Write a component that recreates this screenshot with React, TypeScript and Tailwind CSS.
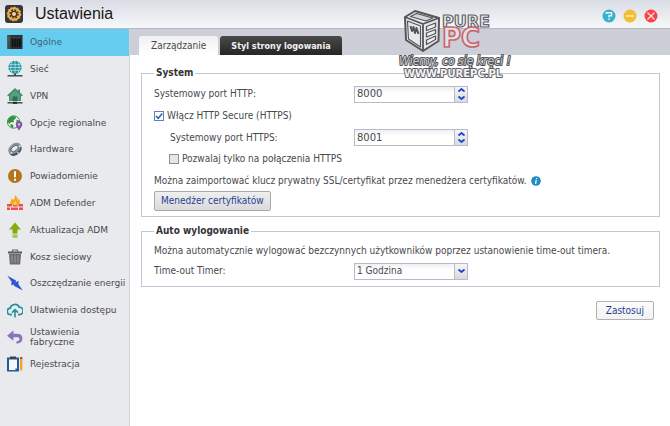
import { useState, type ReactNode } from 'react';

const menu: { label: string; icon: ReactNode }[] = [
  {
    label: 'Ogólne',
    icon: (
      <>
        <rect x="0.5" y="1" width="15" height="14" fill="#2b2d30" />
        <rect x="0.5" y="1" width="3" height="14" fill="#3d4d45" />
        <path d="M5.5 5v8M8 5v8M10.5 5v8M13 5v8" stroke="#101112" strokeWidth="1.6" />
        <path d="M5 3.2h9" stroke="#45494d" strokeWidth="0.8" />
        <path d="M1.5 3.5h1M1.5 6h1" stroke="#3fb26b" />
      </>
    ),
  },
  {
    label: 'Sieć',
    icon: (
      <>
        <circle cx="8" cy="6.4" r="6.6" fill="#1f98a3" />
        <path d="M2.4 3.6h11.2M1.6 6.5h12.8M2.4 9.4h11.200M8 0v13M5 1c-1.600 3-1.600 8 0 11M11 1c1.600 3 1.600 8 0 11" stroke="#e4f2f3" strokeWidth="0.6" fill="none" />
        <path d="M8 12.500v2" stroke="#444" strokeWidth="2" />
        <path d="M0.500 14.800h15" stroke="#3c4043" strokeWidth="1.400" />
      </>
    ),
  },
  {
    label: 'VPN',
    icon: (
      <>
        <path d="M8 0 0 7.4l2 .8V13h12V8.2l2-.8-3-2.8V1.4h-2v1.4z" fill="#45906f" />
        <path d="M8 2.6 3 7.2V12h10V7.2z" fill="#579f7e" />
        <path d="M5.5 8.5h5V13h-5z" fill="#2f6f54" />
        <path d="M0.5 14.8h15" stroke="#3c4043" strokeWidth="1.4" />
        <path d="M6 14.8h4" stroke="#222" strokeWidth="2" />
      </>
    ),
  },
  {
    label: 'Opcje regionalne',
    icon: (
      <>
        <circle cx="6.6" cy="7" r="6.2" fill="#f0f5f1" stroke="#3c9b4d" strokeWidth="1" />
        <path d="M5 1 9 1.6 8.5 4 6.5 5 7 7.4 4.5 7 2 9 .6 6 2 3zM3.5 9l3 1-.5 3.2-2.6-1.6zM9.5 4.5 13 6l-1 1.5-2.5-.8z" fill="#2f9142" />
        <path d="M12 6.2a3.3 3.3 0 0 1 3.3 3.3c0 2.3-2.2 3.5-3.3 6.3-1.1-2.8-3.3-4-3.3-6.3A3.3 3.3 0 0 1 12 6.2" fill="#8653a4" />
        <circle cx="12" cy="9.4" r="1.2" fill="#d8c3e5" />
      </>
    ),
  },
  {
    label: 'Hardware',
    icon: (
      <g transform="rotate(-38 8 8)">
        <ellipse cx="7.6" cy="9.4" rx="6.9" ry="4.6" fill="#48515a" />
        <ellipse cx="8" cy="7.2" rx="7" ry="4.7" fill="#87929a" />
        <ellipse cx="8" cy="7.4" rx="4.2" ry="2.4" fill="#e9eaee" stroke="#4a535b" strokeWidth="0.8" />
        <path d="m1.8 9 2-.6M14.3 9l-2-.6M8 12v2" stroke="#e9eaee" strokeWidth="1.2" />
      </g>
    ),
  },
  {
    label: 'Powiadomienie',
    icon: (
      <>
        <circle cx="8" cy="8" r="7" fill="#b5751b" />
        <path d="M8 3.2v6" stroke="#fff" strokeWidth="2" />
        <path d="M8 10.8v2" stroke="#fff" strokeWidth="2" />
      </>
    ),
  },
  {
    label: 'ADM Defender',
    icon: (
      <>
        <path d="M4 10C2 7 4.4 6 4.4 3.4 6 4 6 5.4 6 5.4S8.6 3 7.8 0c2.8 1.6 2.8 4.4 2.8 5.4.6-.6.8-1.4.8-1.8C13.6 6 13.2 8.4 12 10z" fill="#f6a71c" />
        <path d="M6.4 10c-.6-2 1.6-2.6 1.6-4.6C10 7 10 8.8 9.6 10z" fill="#fbc94a" />
        <path d="M0 9h5v2.6H0zM6 10h4.5v1.6H6zM11.5 9H16v2.6h-4.5zM0 12.6h3V15H0zM4 12.6h7V15H4zM12 12.6h4V15h-4z" fill="#ee4b4e" />
      </>
    ),
  },
  {
    label: 'Aktualizacja ADM',
    icon: (
      <>
        <path d="M8 .5 14 7.4h-3.5v4.2h-5V7.4H2z" fill="#86ab0d" />
        <path d="M5.5 12.4h5v1h-5zM5.5 14.3h5v1.2h-5z" fill="#86ab0d" />
      </>
    ),
  },
  {
    label: 'Kosz sieciowy',
    icon: (
      <>
        <path d="M5.5 2.5V1h5v1.5" fill="none" stroke="#666" strokeWidth="1.2" />
        <path d="M1 2.4h14v2.2H1z" fill="#606060" />
        <path d="M2 5h12l-.8 10.4H2.8z" fill="#6d6d6d" />
        <path d="M5 6.2v7.6M8 6.2v7.6M11 6.2v7.6" stroke="#9b9b9b" strokeWidth="1" />
      </>
    ),
  },
  {
    label: 'Oszczędzanie energii',
    icon: <path d="M.4.8 9 5.6l-.4 1.6 3-1.4-.2 3.4L15.8 15.6 6.8 10.800l.6-1.600-3.200 1.200.4-3.600z" fill="#2c55cf" />,
  },
  {
    label: 'Ułatwienia dostępu',
    icon: (
      <>
        <path d="M5 12.600H3.600A3.200 3.200 0 0 1 3.200 6.200 4.800 4.800 0 0 1 12.200 5.200a3.700 3.700 0 0 1 .4 7.400H11" fill="none" stroke="#269296" strokeWidth="1.700" />
        <path d="M8 15.600V8M5 10.600 8 7.600l3 3" fill="none" stroke="#269296" strokeWidth="1.600" />
      </>
    ),
  },
  {
    label: 'Ustawienia\nfabryczne',
    icon: <path d="M0 6.800 6.400 1.600v3.200h3.800c3.400 0 5.200 2 5.200 4.800s-1.800 4.800-5 4.800h-1v-2.200h.8c1.400 0 2.200-.8 2.200-2.200s-.8-1.800-2.400-1.800H6.400v3.600z" fill="#8a74bd" />,
  },
  {
    label: 'Rejestracja',
    icon: (
      <>
        <path d="M0 1.500h12v14H0z" fill="#245a9c" />
        <path d="M2 3.500h8v8.500l-2 2H2z" fill="#f4f7fa" />
        <path d="M3 .5h6v2.500H3z" fill="#3d464e" />
        <path d="M8 14v-2h2z" fill="#9fb4c9" />
        <path d="M13 3h2.400v10l-1.200 2.500L13 13z" fill="#f2a81e" />
        <path d="M13 1h2.400v2H13z" fill="#c2463c" />
      </>
    ),
  },
];

const tabs = ['Zarządzanie', 'Styl strony logowania'];

function Chevron({ up = false }: { up?: boolean }) {
  return (
    <svg viewBox="0 0 7 4" className="h-1 w-[7px]">
      <path d={up ? 'M.5 3.500 3.500 1l3 2.500' : 'M.5.5 3.500 3l3-2.500'} fill="none" stroke="#1546c0" strokeWidth="1.800" />
    </svg>
  );
}

function PortField({ id, value, onChange }: { id: string; value: number; onChange: (v: number) => void }) {
  return (
    <div className="flex h-[17px] w-[114px] shrink-0 border border-[#b9bbcb] bg-linear-to-b from-[#eef0f1] to-white to-40%">
      <input
        id={id}
        value={value}
        onChange={(e) => onChange(Number(e.target.value) || 0)}
        className="w-full min-w-0 bg-transparent px-[2px] font-['DejaVu_Sans',sans-serif] outline-none"
      />
      <div className="flex w-[13px] shrink-0 flex-col border-l border-[#b9bbcb] bg-linear-to-b from-[#f6f6f8] to-[#d9dade]">
        <button type="button" aria-label="+" className="flex flex-1 items-center justify-center" onClick={() => onChange(value + 1)}>
          <Chevron up />
        </button>
        <button type="button" aria-label="-" className="flex flex-1 items-center justify-center" onClick={() => onChange(value - 1)}>
          <Chevron />
        </button>
      </div>
    </div>
  );
}

function Checkbox({ id, checked, onChange }: { id: string; checked: boolean; onChange: (v: boolean) => void }) {
  return (
    <span className="relative flex size-[10px] shrink-0">
      <input
        id={id}
        type="checkbox"
        checked={checked}
        onChange={(e) => onChange(e.target.checked)}
        className="size-[10px] appearance-none border border-[#8e8f95] bg-[#e6e6e8] checked:border-[#5d83b4] checked:bg-white"
      />
      {checked && (
        <svg viewBox="0 0 10 10" className="pointer-events-none absolute inset-0">
          <path d="m2 5 2.200 2.300L8.300 2.500" fill="none" stroke="#2b62ad" strokeWidth="1.500" />
        </svg>
      )}
    </span>
  );
}

function Watermark() {
  return (
    <svg viewBox="0 0 120 76" className="pointer-events-none absolute top-[6px] left-[396px] h-[76px] w-[120px]" fill="none">
      <g stroke="#55565a" strokeLinejoin="round">
        <path d="M9 11 19 5l24 7-.5 23L27 45 10 34z" fill="#e7e8eb" strokeWidth="2" />
        <path d="m9 11 18 7 16-6M27 18v27" strokeWidth="1.800" />
        <path d="m14.500 10.500 6-3L37 12l-7 3z" fill="#d5d6da" strokeWidth="1.200" />
        <path d="m11.500 15 13 5v21l-12-8z" strokeWidth="1.100" />
        <path d="m14.500 20 1.500 5 1.500-4 1.500 6 1.500-5 2 6" strokeWidth="2" />
        <path d="m30.500 20.500 9-3.500v4l-9 3.500zM30.500 27l9-3.500v4l-9 3.500zM30.500 34l9-4v3.500l-9 5z" fill="#f0f0f2" strokeWidth="1.300" />
      </g>
      <g className="font-['DejaVu_Sans',sans-serif] font-bold" strokeLinejoin="round">
        <text x="46" y="21" fontSize="16" fill="#eceef2" stroke="#626368" strokeWidth="1.200">PURE</text>
        <text x="46" y="41" fontSize="26" fill="#dfe1e7" stroke="#cb656c" strokeWidth="1.600">PC</text>
        <text x="8" y="71" fontSize="10" fill="#f4f4f5" stroke="#5c5d62" strokeWidth="1.800" paintOrder="stroke">WWW.PUREPC.PL</text>
      </g>
      <text x="3" y="59" fontSize="12" fill="#c9cacd" stroke="#55565a" strokeWidth="2" strokeLinejoin="round" paintOrder="stroke" className="font-['DejaVu_Sans_Condensed','DejaVu_Sans',sans-serif] italic">
        Wiemy, co się kręci !
      </text>
    </svg>
  );
}

export default function App() {
  const [section, setSection] = useState(0);
  const [tab, setTab] = useState(0);
  const [http, setHttp] = useState(8000);
  const [https, setHttps] = useState(8001);
  const [secure, setSecure] = useState(true);
  const [only, setOnly] = useState(false);

  return (
    <div className="relative flex min-h-screen flex-col bg-white font-['DejaVu_Sans_Condensed','DejaVu_Sans',sans-serif] text-[10px] leading-4 text-[#48494d]">
      <header className="flex h-[29px] items-center border-b border-[#b5b7c1] bg-linear-to-b from-[#d9dce4] to-[#f7f8fa] pr-3 pl-[5px]">
        <svg viewBox="0 0 18 18" className="size-[18px]">
          <rect width="18" height="18" rx="3" fill="#34383d" />
          <circle cx="9" cy="9" r="5" fill="none" stroke="#f1ad3d" strokeWidth="3.400" />
          <circle cx="9" cy="9" r="6.800" fill="none" stroke="#f3b951" strokeWidth="1" strokeDasharray="2 1.500" />
          <circle cx="9" cy="9" r="4" fill="none" stroke="#3a3225" strokeWidth="1.600" strokeDasharray="1.600 1.540" />
          <circle cx="9" cy="9" r="2" fill="#f6d392" />
        </svg>
        <h1 className="ml-3 font-['Liberation_Sans',sans-serif] text-base leading-6 text-[#17181b]">Ustawienia</h1>
        <div className="ml-auto flex gap-[7px] pt-1">
          <button type="button" aria-label="Pomoc">
            <svg viewBox="0 0 14 14" className="size-[14px]">
              <circle cx="7" cy="7" r="6.500" fill="#38b1cd" />
              <path d="M4.500 5V3.800h5v3H7V8.500M7 9.500v1.500" fill="none" stroke="#e8f8fc" strokeWidth="1.400" />
            </svg>
          </button>
          <button type="button" aria-label="Minimalizuj">
            <svg viewBox="0 0 14 14" className="size-[14px]">
              <circle cx="7" cy="7" r="6.500" fill="#f5bd32" />
              <path d="M3 7h8" stroke="#fff2cc" strokeWidth="1.500" />
            </svg>
          </button>
          <button type="button" aria-label="Zamknij">
            <svg viewBox="0 0 14 14" className="size-[14px]">
              <circle cx="7" cy="7" r="6.500" fill="#f74545" />
              <path d="m3.500 3.500 7 7M10.500 3.500l-7 7" stroke="#ffe1e1" strokeWidth="1.200" />
            </svg>
          </button>
        </div>
      </header>

      <div className="flex flex-1">
        <nav className="w-[130px] shrink-0 border-r border-[#d3d4da] bg-[#e9eaee]">
          <div className="grid h-[348px] auto-rows-fr">
            {menu.map((item, i) => (
              <a
                key={item.label}
                href="#"
                onClick={() => setSection(i)}
                className={`flex items-center gap-[7px] pl-[7px] font-['DejaVu_Sans',sans-serif] text-[9px] leading-[10px] ${i === section ? 'bg-[#67cdf0] text-[#3c6173]' : ''}`}
              >
                <svg viewBox="0 0 16 16" className="size-4 shrink-0">
                  {item.icon}
                </svg>
                <span className="whitespace-pre-line">{item.label}</span>
              </a>
            ))}
          </div>
        </nav>

        <main className="min-w-0 flex-1">
          <div className="flex h-[26px] items-end gap-[2px] bg-[#cccfd8] pl-[9px]">
            {tabs.map((label, i) => (
              <button
                key={label}
                type="button"
                onClick={() => setTab(i)}
                className={
                  i === tab
                    ? 'h-[19px] rounded-t-[3px] bg-linear-to-b from-[#f0f0f3] to-white px-3'
                    : 'h-[19px] rounded-t-[3px] bg-linear-to-b from-[#4a4a4a] to-[#262626] px-[11px] text-[9px] font-bold text-[#f2f2f2]'
                }
              >
                {label}
              </button>
            ))}
          </div>

          <form className="flex flex-col gap-[6px] pt-[10px] pr-[10px] pl-[11px]" onSubmit={(e) => e.preventDefault()}>
            <fieldset className="min-w-0 border border-[#c5c6d5] px-3 pt-[2px] pb-[5px]">
              <legend className="px-[2px] font-bold text-[#333438]">System</legend>
              <div className="flex h-[22px] items-center">
                <label htmlFor="http" className="w-[200px]">Systemowy port HTTP:</label>
                <PortField id="http" value={http} onChange={setHttp} />
              </div>
              <div className="flex h-[22px] items-center gap-[3px]">
                <Checkbox id="secure" checked={secure} onChange={setSecure} />
                <label htmlFor="secure">Włącz HTTP Secure (HTTPS)</label>
              </div>
              <div className="flex h-[21px] items-center pl-4">
                <label htmlFor="https" className="w-[184px]">Systemowy port HTTPS:</label>
                <PortField id="https" value={https} onChange={setHttps} />
              </div>
              <div className="flex h-[22px] items-center gap-[3px] pl-[15px]">
                <Checkbox id="only" checked={only} onChange={setOnly} />
                <label htmlFor="only">Pozwalaj tylko na połączenia HTTPS</label>
              </div>
              <p className="flex h-[21px] items-center gap-1">
                Można zaimportować klucz prywatny SSL/certyfikat przez menedżera certyfikatów.
                <svg viewBox="0 0 10 10" className="size-[10px] shrink-0">
                  <circle cx="5" cy="5" r="4.800" fill="#1f8cc0" />
                  <path d="M5.500 2v1.200M5.200 4.200 4.600 8" stroke="#fff" strokeWidth="1.300" />
                </svg>
              </p>
              <button type="button" className="block h-5 rounded-[2px] border border-[#a9a9ab] bg-linear-to-b from-[#efefef] to-[#dadada] px-[6px] text-[#263f91]">
                Menedżer certyfikatów
              </button>
            </fieldset>

            <fieldset className="min-w-0 border border-[#c5c6d5] px-3 pt-[2px] pb-[5px]">
              <legend className="px-[2px] font-bold text-[#333438]">Auto wylogowanie</legend>
              <p className="py-[2px]">
                Można automatycznie wylogować bezczynnych użytkowników poprzez ustanowienie time-out timera.
              </p>
              <div className="flex h-5 items-center">
                <label htmlFor="timer" className="w-[200px]">Time-out Timer:</label>
                <div className="relative h-[17px] w-[114px] border border-[#b9bbcb]">
                  <select id="timer" className="block h-full w-full appearance-none bg-linear-to-b from-[#eef0f1] to-white to-40% px-[2px] leading-[14px] outline-none">
                    <option>1 Godzina</option>
                  </select>
                  <span className="pointer-events-none absolute inset-y-0 right-0 flex w-[13px] items-center justify-center border-l border-[#b9bbcb] bg-linear-to-b from-[#f6f6f8] to-[#d9dade]">
                    <Chevron />
                  </span>
                </div>
              </div>
            </fieldset>

            <button type="submit" className="mt-2 mr-[6px] h-[19px] self-end rounded-[2px] border border-[#b1b1b3] bg-linear-to-b from-[#fcfcfc] to-[#f2f2f2] px-[9px] text-[#263f91]">
              Zastosuj
            </button>
          </form>
        </main>
      </div>
      <Watermark />
    </div>
  );
}
